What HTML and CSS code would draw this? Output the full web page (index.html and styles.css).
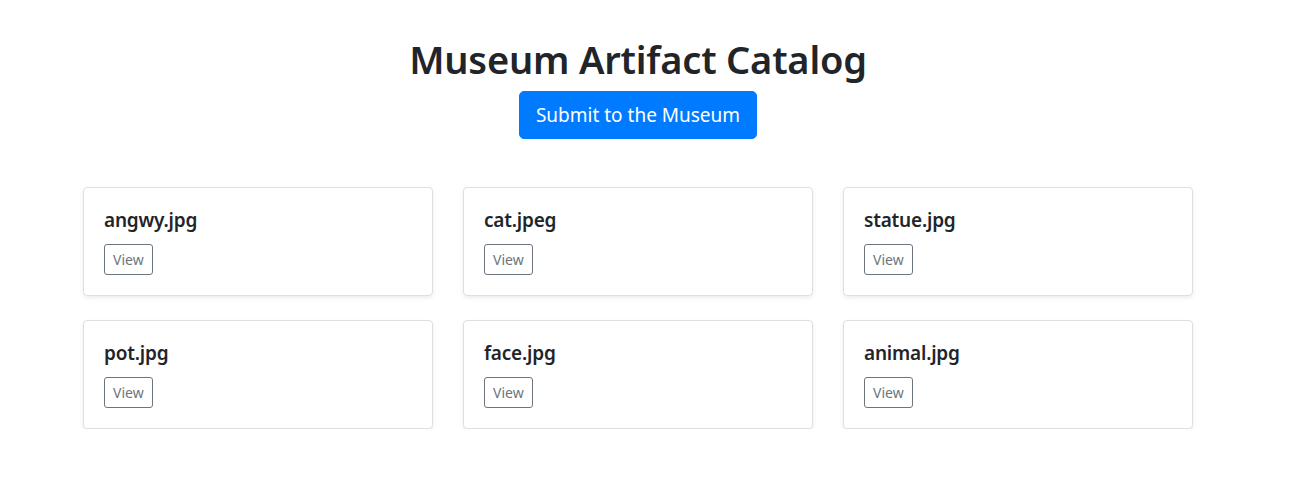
FILE: index.html
```html
<!DOCTYPE html>
<html lang="en">
  <head>
    <meta charset="UTF-8" />
    <meta name="viewport" content="width=device-width, initial-scale=1.0" />
    <title>Museum Artifact Catalog</title>
    <link rel="stylesheet" href="styles.css">
  </head>
  <body>
    <!-- =========== header ========= -->
    <div class="catalog">
      <header class="catalog-head">
        <h1>Museum Artifact Catalog</h1>
        <a class="btn-submit" href="#">Submit to the Museum</a>
      </header>

      <!-- =========== artifacts ========= -->
      <div class="artifact-grid">
        <div class="artifact-card">
          <h5>angwy.jpg</h5>
          <a class="btn-view" href="#">View</a>
        </div>
        <div class="artifact-card">
          <h5>cat.jpeg</h5>
          <a class="btn-view" href="#">View</a>
        </div>
        <div class="artifact-card">
          <h5>statue.jpg</h5>
          <a class="btn-view" href="#">View</a>
        </div>
        <div class="artifact-card">
          <h5>pot.jpg</h5>
          <a class="btn-view" href="#">View</a>
        </div>
        <div class="artifact-card">
          <h5>face.jpg</h5>
          <a class="btn-view" href="#">View</a>
        </div>
        <div class="artifact-card">
          <h5>animal.jpg</h5>
          <a class="btn-view" href="#">View</a>
        </div>
      </div>
    </div>
  </body>
</html>
```

FILE: styles.css
```css
* {
  margin: 0;
  padding: 0;
  box-sizing: border-box;
}

body {
  background-color: #fff;
  color: #212529;
  font-family: "Noto Sans", "Open Sans", sans-serif;
  /* leave room like a scrollbar gutter */
  padding-right: 18px;
}

.catalog {
  max-width: 1110px;
  margin: 0 auto;
}

.catalog-head {
  text-align: center;
  padding-top: 35px;
}

h1 {
  font-size: 38px;
  font-weight: 600;
  line-height: 48px;
  letter-spacing: -0.2px;
  margin-bottom: 8px;
}

.btn-submit {
  display: inline-block;
  background: #007bff;
  color: #fff;
  font-size: 19px;
  line-height: 30px;
  padding: 8px 16px;
  border: 1px solid #007bff;
  border-radius: 5px;
  text-decoration: none;
}

.artifact-grid {
  display: grid;
  grid-template-columns: repeat(3, 1fr);
  column-gap: 30px;
  row-gap: 24px;
  margin-top: 48px;
}

.artifact-card {
  border: 1px solid rgba(0, 0, 0, 0.125);
  border-radius: 4px;
  box-shadow: 0 2px 4px rgba(0, 0, 0, 0.075);
  padding: 20px;
}

h5 {
  font-size: 19px;
  font-weight: 600;
  line-height: 24px;
  letter-spacing: -0.2px;
  margin-bottom: 12px;
}

.btn-view {
  display: inline-block;
  color: #6c757d;
  font-size: 14px;
  line-height: 1.5;
  padding: 4px 8px;
  border: 1px solid #6c757d;
  border-radius: 3px;
  text-decoration: none;
}
```
